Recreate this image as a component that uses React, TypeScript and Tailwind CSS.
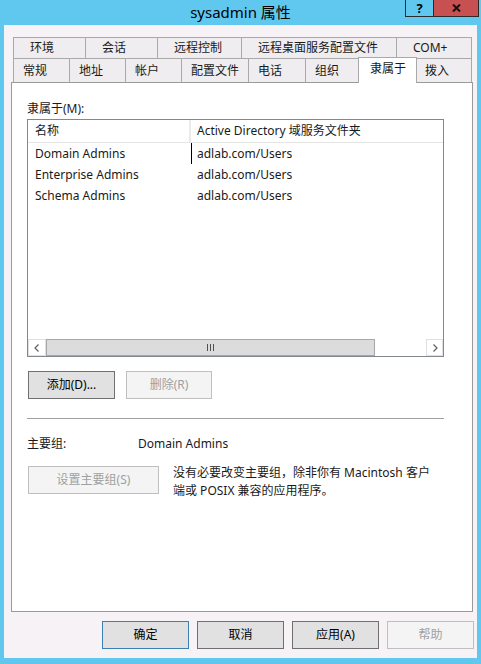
const font = { fontFamily: '"Noto Sans", "Noto Sans CJK SC", sans-serif' };

const row1 = [
  { label: '环境', w: 'w-[73px]', pl: 'pl-[16px]' },
  { label: '会话', w: 'w-[72px]', pl: 'pl-[16px]' },
  { label: '远程控制', w: 'w-[84px]', pl: 'pl-[16px]' },
  { label: '远程桌面服务配置文件', w: 'w-[155px]', pl: 'pl-[16px]' },
  { label: 'COM+', w: 'w-[75px]', pl: 'pl-[16px]' },
];

const row2 = [
  { label: '常规', w: 'w-[57px]' },
  { label: '地址', w: 'w-[56px]' },
  { label: '帐户', w: 'w-[56px]' },
  { label: '配置文件', w: 'w-[67px]' },
  { label: '电话', w: 'w-[57px]' },
  { label: '组织', w: 'w-[54px]' },
];

const groups = [
  { name: 'Domain Admins', path: 'adlab.com/Users' },
  { name: 'Enterprise Admins', path: 'adlab.com/Users' },
  { name: 'Schema Admins', path: 'adlab.com/Users' },
];

function Btn({ label, w, disabled, primary }: { label: string; w: string; disabled?: boolean; primary?: boolean }) {
  const cls = disabled
    ? 'bg-[#f4f4f4] border-[#bfbfbf] text-[#a0a0a0]'
    : primary
      ? 'bg-[#e1e1e1] border-[#3c7fb1] text-black'
      : 'bg-[#e1e1e1] border-[#707070] text-black';
  return (
    <div className={`${w} h-[28px] border flex items-center justify-center text-[12px] ${cls}`}>{label}</div>
  );
}

export default function App() {
  return (
    <div className="w-[481px] h-[664px] bg-[#60c8ef] flex flex-col text-[#1a1a1a]" style={font}>
      <div className="relative h-[25px] flex items-center justify-center text-[15px] text-black">
        sysadmin 属性
        <div className="absolute top-0 right-[2px] flex">
          <div className="w-[29px] h-[17px] border border-[#2a2a2a] border-t-0 flex justify-center">
            <span className="text-[13px] leading-[16px] font-bold">?</span>
          </div>
          <div className="w-[45px] h-[17px] bg-[#c75050] border border-l-0 border-t-0 border-[#2a2a2a] flex items-center justify-center">
            <svg width="9" height="8" viewBox="0 0 9 8"><path d="M1 0.5 L8 7.5 M8 0.5 L1 7.5" stroke="#111" strokeWidth="2" /></svg>
          </div>
        </div>
      </div>

      <div className="mx-[4px] h-[633px] bg-[#f6f2f6] flex flex-col">
        <div className="pt-[12px] pl-[9px] flex">
          {row1.map((t, i) => (
            <div
              key={t.label}
              className={`${t.w} ${t.pl} h-[21px] bg-[#efedef] border border-[#a9a9a9] ${i > 0 ? 'border-l-0' : ''} border-b-0 flex items-center text-[12px]`}
            >
              {t.label}
            </div>
          ))}
        </div>
        <div className="pl-[9px] flex items-end h-[24px] relative z-10">
          {row2.map((t, i) => (
            <div
              key={t.label}
              className={`${t.w} h-[24px] pl-[9px] bg-[#efedef] border border-[#a9a9a9] ${i > 0 ? 'border-l-0' : ''} border-b-0 flex items-center text-[12px]`}
            >
              {t.label}
            </div>
          ))}
          <div className="w-[59px] h-[26px] -ml-[2px] mb-[-1px] pl-[11px] pb-[3px] bg-white border border-[#a9a9a9] border-b-0 flex items-center text-[12px]">
            隶属于
          </div>
          <div className="w-[55px] h-[24px] pl-[8px] bg-[#efedef] border border-[#a9a9a9] border-l-0 border-b-0 flex items-center text-[12px]">
            拨入
          </div>
        </div>

        <div className="ml-[7px] w-[462px] h-[530px] bg-white border border-[#9a9a9a] flex flex-col pl-[15px] pt-[18px]">
          <div className="h-[16px] leading-[16px] text-[12px]">隶属于(M):</div>
          <div className="mt-[2px] w-[417px] h-[238px] border border-[#828790] flex flex-col">
            <div className="h-[23px] flex border-b border-[#e5e5e5] text-[12px]">
              <div className="w-[163px] pl-[7px] flex items-center border-r-2 border-[#eaeaea]">名称</div>
              <div className="pl-[6px] flex items-center">Active Directory 域服务文件夹</div>
            </div>
            {groups.map((g, i) => (
              <div key={g.name} className="h-[21px] flex text-[12px]">
                <div className="w-[163px] pl-[7px] flex items-center">{g.name}</div>
                <div className={`pl-[5px] flex items-center ${i === 0 ? 'border-l border-black' : 'ml-px'}`}>{g.path}</div>
              </div>
            ))}
            <div className="flex-1" />
            <div className="h-[17px] flex bg-white">
              <div className="w-[18px] border border-[#e0e0e0] flex items-center justify-center">
                <svg width="6" height="8" viewBox="0 0 6 8"><path d="M4.5 0.5 L1 4 L4.5 7.5" stroke="#606060" strokeWidth="1.2" fill="none" /></svg>
              </div>
              <div className="w-[329px] bg-[#dcdcdc] border border-[#a6a6a6] flex items-center justify-center">
                <svg width="7" height="7" viewBox="0 0 7 7"><path d="M0.5 0 V7 M3.5 0 V7 M6.5 0 V7" stroke="#505050" strokeWidth="1" /></svg>
              </div>
              <div className="flex-1" />
              <div className="w-[17px] border border-[#e0e0e0] flex items-center justify-center">
                <svg width="6" height="8" viewBox="0 0 6 8"><path d="M1.5 0.5 L5 4 L1.5 7.5" stroke="#606060" strokeWidth="1.2" fill="none" /></svg>
              </div>
            </div>
          </div>

          <div className="mt-[14px] ml-px flex gap-[11px]">
            <Btn label="添加(D)..." w="w-[87px]" />
            <Btn label="删除(R)" w="w-[86px]" disabled />
          </div>

          <div className="mt-[19px] w-[417px] h-px bg-[#a0a0a0]" />

          <div className="mt-[17px] h-[16px] flex items-center text-[12px]">
            <div className="w-[111px]">主要组:</div>
            <div>Domain Admins</div>
          </div>

          <div className="mt-[14px] ml-px flex">
            <Btn label="设置主要组(S)" w="w-[131px]" disabled />
            <div className="ml-[14px] -mt-[2px] w-[264px] text-[12px] leading-[18px]">
              没有必要改变主要组，除非你有 Macintosh 客户端或 POSIX 兼容的应用程序。
            </div>
          </div>
        </div>

        <div className="mt-[9px] ml-[98px] flex gap-[8px]">
          <Btn label="确定" w="w-[87px]" primary />
          <Btn label="取消" w="w-[87px]" />
          <Btn label="应用(A)" w="w-[87px]" />
          <Btn label="帮助" w="w-[87px]" disabled />
        </div>
      </div>
    </div>
  );
}
